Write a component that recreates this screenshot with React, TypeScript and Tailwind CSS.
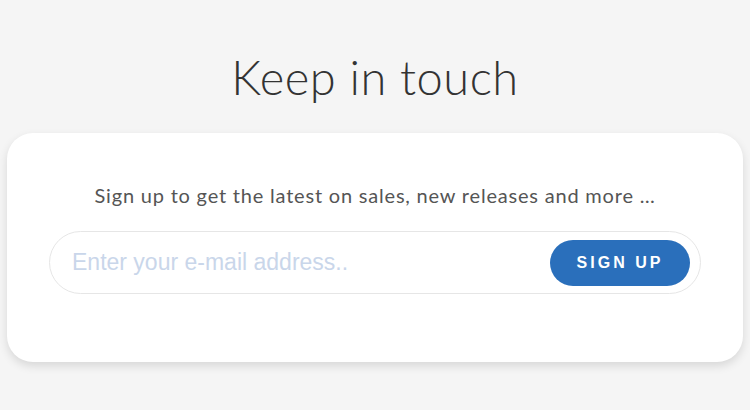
import { useState } from 'react';

export default function App() {
  const [email, setEmail] = useState('');

  return (
    <div className="min-h-screen w-full bg-[#f5f5f5] flex flex-col items-center pt-[47px] px-[7px]" style={{ fontFamily: 'Lato, "Noto Sans", sans-serif' }}>
      <h1 className="text-[47px] font-light text-[#333] leading-[60px] tracking-[0.5px]">Keep in touch</h1>
      <div className="mt-[26px] w-full bg-white rounded-[26px] shadow-[0_4px_10px_rgba(0,0,0,0.12)] flex flex-col items-center pt-[48px] pb-[68px]">
        <p className="text-[20px] text-[#555] leading-[28px] tracking-[0.8px]">Sign up to get the latest on sales, new releases and more …</p>
        <form
          onSubmit={(e) => e.preventDefault()}
          className="mt-[22px] w-[652px] h-[63px] rounded-full border border-[#e6e6e6] flex items-center pl-[22px] pr-[10px]"
        >
          <input
            type="email"
            value={email}
            onChange={(e) => setEmail(e.target.value)}
            placeholder="Enter your e-mail address.."
            className="flex-1 bg-transparent outline-none text-[23px] text-[#333] placeholder:text-[#c9d6ea]"
            style={{ fontFamily: '"Liberation Sans", Arial, sans-serif' }}
          />
          <button
            type="submit"
            className="w-[140px] h-[46px] rounded-full bg-[#2a6fbb] text-white text-[16px] font-bold tracking-[3px]"
            style={{ fontFamily: '"Liberation Sans", Arial, sans-serif' }}
          >
            SIGN UP
          </button>
        </form>
      </div>
    </div>
  );
}
